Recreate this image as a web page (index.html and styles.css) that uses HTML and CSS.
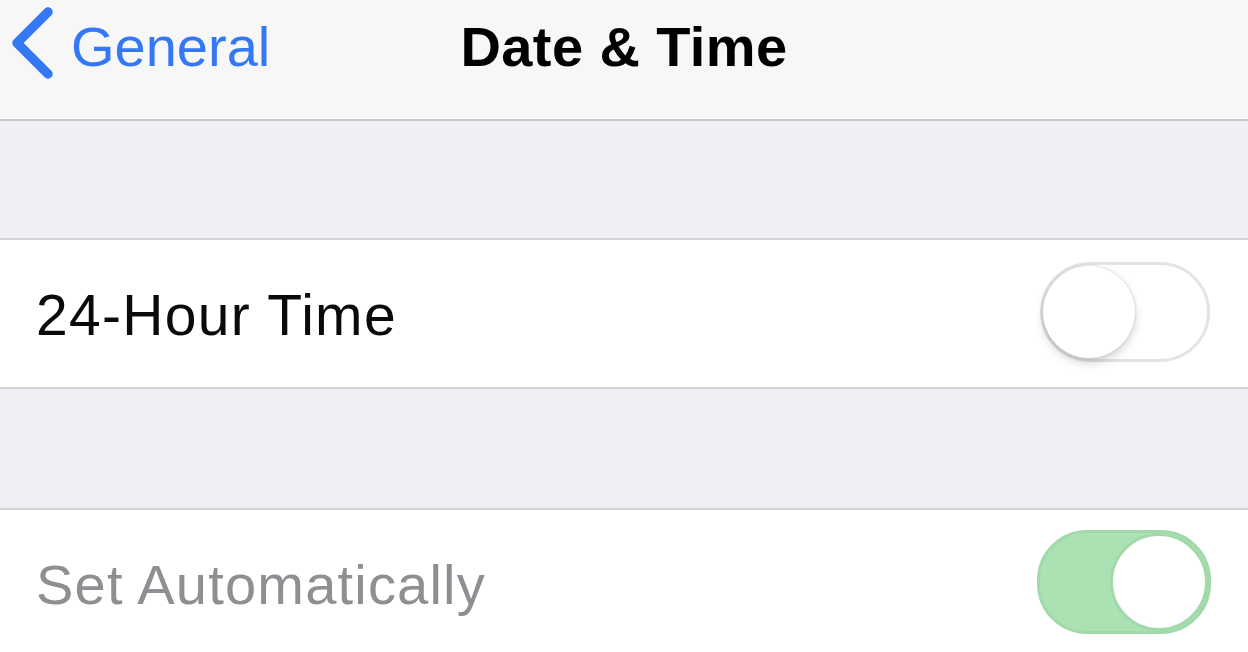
FILE: index.html
```html
<!DOCTYPE html>
<html lang="en">
<head>
  <meta charset="UTF-8" />
  <meta name="viewport" content="width=device-width, initial-scale=1.0" />
  <title>Date &amp; Time</title>
  <link rel="stylesheet" href="styles.css">
</head>
<body>
  <header class="navbar">
    <a class="back" href="#">
      <svg class="chevron" width="44" height="74" viewBox="0 0 44 74">
        <path d="M38 6 L7 37 L38 68" fill="none" stroke="#3478f6" stroke-width="9.5" stroke-linecap="round" stroke-linejoin="round"/>
      </svg>
      <span>General</span>
    </a>
    <h1>Date &amp; Time</h1>
    <div></div>
  </header>

  <div class="spacer"></div>

  <section class="group">
    <div class="cell">
      <span class="label">24-Hour Time</span>
      <div class="switch">
        <div class="knob"></div>
      </div>
    </div>
  </section>

  <div class="spacer tall"></div>

  <section class="group">
    <div class="cell">
      <span class="label disabled">Set Automatically</span>
      <div class="switch on">
        <div class="knob"></div>
      </div>
    </div>
  </section>
</body>
</html>
```

FILE: styles.css
```css
:root {
  --nav-bg: #f7f7f8;
  --group-bg: #efeff4;
  --line: #c8c7cc;
  --blue: #3478f6;
  --text: #0a0a0a;
  --muted: #8e8e93;
  --green: #abe2b3;
}

body {
  margin: 0;
  background: var(--group-bg);
  font-family: 'Liberation Sans', Arial, sans-serif;
  color: var(--text);
  overflow: hidden;
}

.navbar {
  height: 104px;
  padding-top: 15px;
  background: var(--nav-bg);
  border-bottom: 2px solid var(--line);
  display: grid;
  grid-template-columns: 1fr auto 1fr;
  align-items: start;
}

.back {
  display: flex;
  align-items: flex-start;
  gap: 17px;
  padding-left: 10px;
  color: var(--blue);
  text-decoration: none;
  font-size: 56px;
  line-height: 64px;
}

.chevron {
  margin-top: -9px;
  flex-shrink: 0;
}

.navbar h1 {
  margin: 0;
  font-size: 56px;
  line-height: 64px;
  font-weight: 700;
  letter-spacing: 0.4px;
  color: #000;
}

.spacer {
  height: 117px;
}

.spacer.tall {
  height: 119px;
}

.group {
  background: #fff;
  border-top: 2px solid #d4d3d8;
  border-bottom: 2px solid #d4d3d8;
}

.cell {
  height: 147px;
  display: flex;
  align-items: center;
  justify-content: space-between;
  padding: 0 38px 0 36px;
}

.label {
  font-size: 57px;
  line-height: 64px;
  padding-top: 3px;
  letter-spacing: 1.3px;
}

.label.disabled {
  color: var(--muted);
  font-size: 56px;
  letter-spacing: 1.2px;
}

.switch {
  width: 164px;
  height: 94px;
  border: 3px solid #e3e3e8;
  border-radius: 50px;
  background: #fff;
  display: flex;
  align-items: center;
  margin-bottom: 4px;
}

.knob {
  width: 92px;
  height: 92px;
  border-radius: 50%;
  background: #fff;
  box-shadow: 0 5px 10px rgba(0, 0, 0, 0.16), 0 0 3px rgba(0, 0, 0, 0.18);
}

.switch.on {
  width: 168px;
  height: 98px;
  background: var(--green);
  border-color: #a1d9ab;
  justify-content: flex-end;
  margin: 0 -1px 4px 0;
}

.switch.on .knob {
  width: 92px;
  height: 92px;
  border: 3px solid #a1d9ab;
  box-shadow: none;
}
```
